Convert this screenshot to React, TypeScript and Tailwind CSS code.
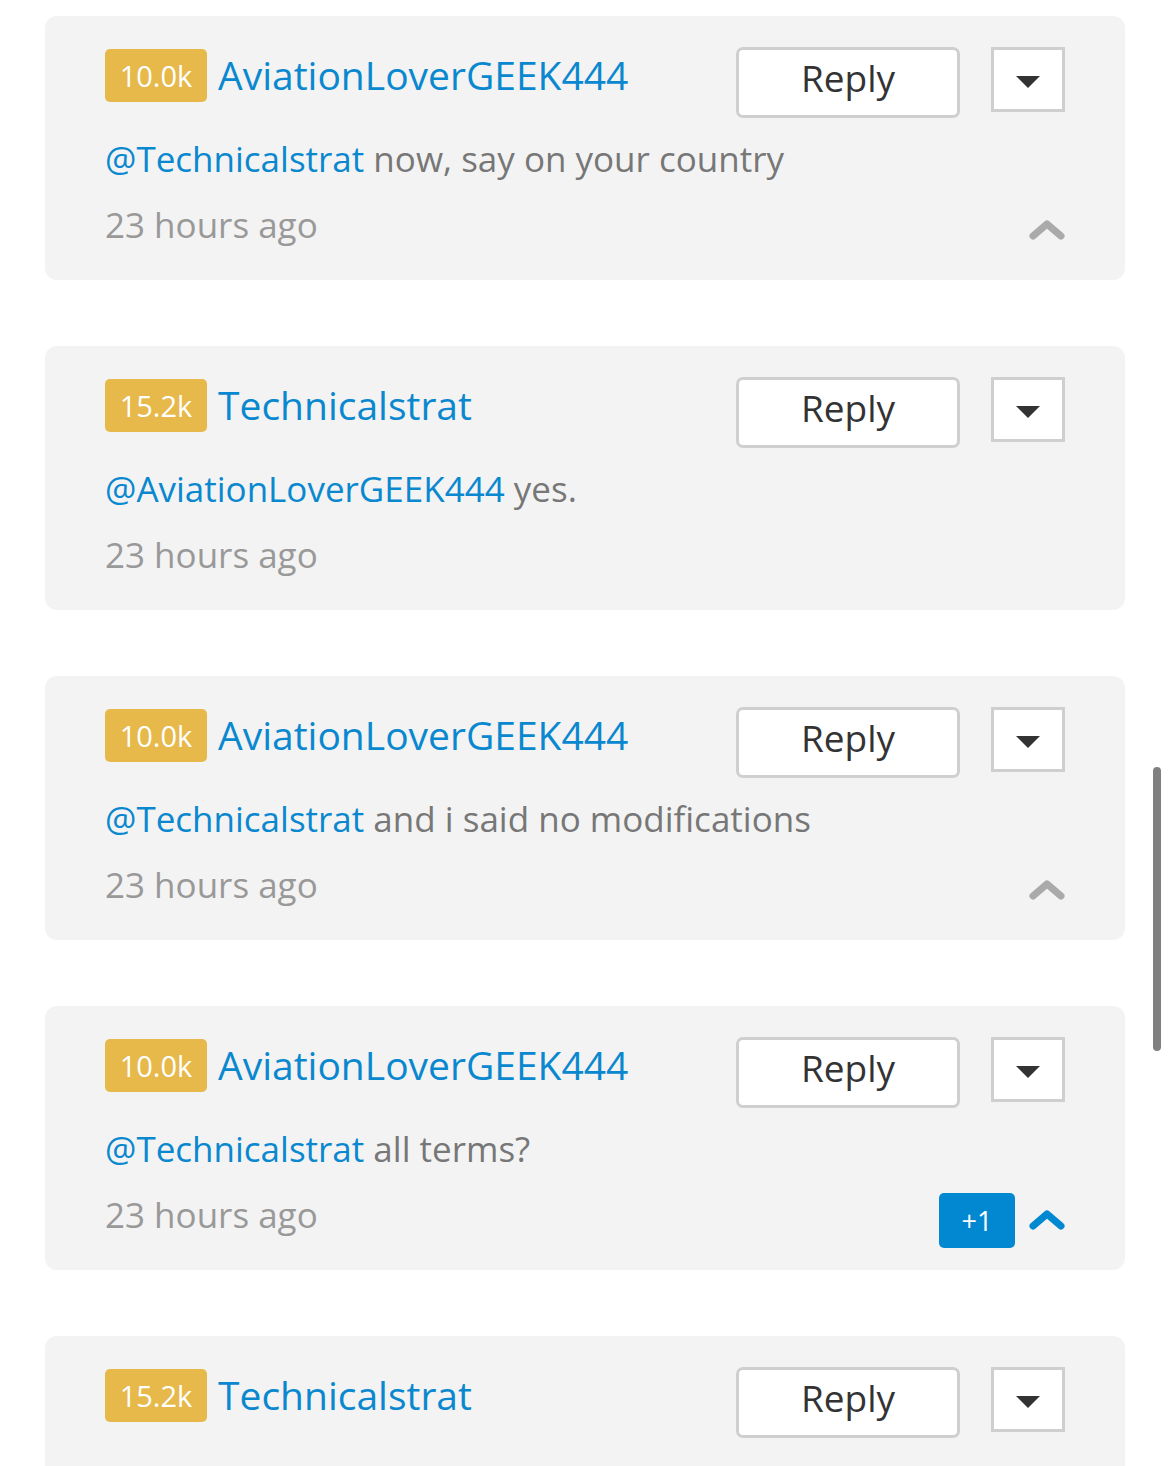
import React from "react";

type C = {
  score: string;
  user: string;
  mention: string;
  text: string;
  chevron?: "gray" | "blue" | null;
  plus?: boolean;
};

const comments: C[] = [
  { score: "10.0k", user: "AviationLoverGEEK444", mention: "@Technicalstrat", text: " now, say on your country", chevron: "gray" },
  { score: "15.2k", user: "Technicalstrat", mention: "@AviationLoverGEEK444", text: " yes.", chevron: null },
  { score: "10.0k", user: "AviationLoverGEEK444", mention: "@Technicalstrat", text: " and i said no modifications", chevron: "gray" },
  { score: "10.0k", user: "AviationLoverGEEK444", mention: "@Technicalstrat", text: " all terms?", chevron: "blue", plus: true },
  { score: "15.2k", user: "Technicalstrat", mention: "@AviationLoverGEEK444", text: " good luck.", chevron: "gray" },
];

function Chevron({ color }: { color: string }) {
  return (
    <svg width="36" height="22" viewBox="0 0 36 22" className="block">
      <polyline points="4,17 18,5 32,17" fill="none" stroke={color} strokeWidth="7" strokeLinecap="round" strokeLinejoin="round" />
    </svg>
  );
}

function Card({ c }: { c: C }) {
  return (
    <div className="bg-[#f3f3f3] rounded-[12px] h-[264px] shrink-0 px-[60px] pt-[31px] flex flex-col">
      <div className="flex items-start h-[70px]">
        <div className="flex items-center mt-[2px] flex-1 min-w-0">
          <span className="bg-[#e6b94a] text-white rounded-[5px] h-[53px] w-[102px] flex items-center justify-center text-[29px] leading-none">
            {c.score}
          </span>
          <span className="ml-[11px] text-[#0a88cf] text-[39px] leading-none whitespace-nowrap -mt-[2px]">{c.user}</span>
        </div>
        <button className="w-[224px] h-[71px] bg-white border-[3px] border-[#cfcfcf] rounded-[7px] text-[#333] text-[37px] leading-none flex items-center justify-center pb-[10px]">
          Reply
        </button>
        <button className="ml-[31px] w-[74px] h-[65px] bg-white border-[3px] border-[#cfcfcf] flex items-center justify-center">
          <svg width="24" height="12" viewBox="0 0 24 12" className="mt-[4px]">
            <polygon points="0,0 24,0 12,12" fill="#333" />
          </svg>
        </button>
      </div>
      <div className="mt-[17px] h-[48px] flex items-center text-[35px] leading-none whitespace-nowrap">
        <span className="text-[#0a88cf]">{c.mention}</span>
        <span className="text-[#777] whitespace-pre">{c.text}</span>
      </div>
      <div className="mt-[18px] h-[48px] flex items-center justify-between">
        <span className="text-[#999] text-[35px] leading-none">23 hours ago</span>
        <div className="flex items-center mt-[12px]">
          {c.plus && (
            <span className="bg-[#0288d1] text-white text-[27px] leading-none rounded-[5px] w-[76px] h-[55px] flex items-center justify-center mr-[14px]">
              +1
            </span>
          )}
          {c.chevron && <Chevron color={c.chevron === "blue" ? "#0288d1" : "#aaaaaa"} />}
        </div>
      </div>
    </div>
  );
}

export default function App() {
  return (
    <div
      className="relative w-[1170px] h-[1466px] bg-white overflow-hidden"
      style={{ fontFamily: '"Open Sans", "Noto Sans", sans-serif' }}
    >
      <div className="flex flex-col gap-[66px] pt-[16px] pl-[45px] w-[1125px]">
        {comments.map((c, i) => (
          <Card key={i} c={c} />
        ))}
      </div>
      <div className="absolute left-[1153px] top-[767px] w-[8px] h-[284px] rounded-full bg-[#808080]" />
    </div>
  );
}
